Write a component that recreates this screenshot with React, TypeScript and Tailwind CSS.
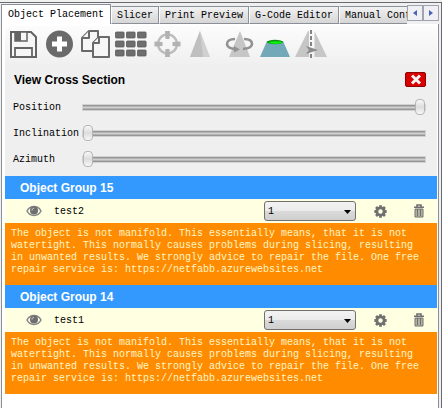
import { useState, type ReactNode } from "react";

const WARNING =
  "The object is not manifold. This essentially means, that it is not watertight. This normally causes problems during slicing, resulting in unwanted results. We strongly advice to repair the file. One free repair service is: https://netfabb.azurewebsites.net";

const TABS = ["Object Placement", "Slicer", "Print Preview", "G-Code Editor", "Manual Control"];

const GROUPS = [
  { title: "Object Group 15", name: "test2" },
  { title: "Object Group 14", name: "test1" },
];

const TOOLS: { label: string; icon: ReactNode }[] = [
  {
    label: "Save",
    icon: (
      <>
        <path d="M6 6H26L31 11V31H6Z" fill="#f6f6f6" stroke="#646464" strokeWidth="2" />
        <path d="M10 6H22V15H10Z" fill="#f6f6f6" stroke="#646464" strokeWidth="1.5" />
        <path d="M10 6H16V15H10Z" fill="#646464" />
        <path d="M10 31V22H27V31" fill="none" stroke="#646464" strokeWidth="1.8" />
      </>
    ),
  },
  {
    label: "Add object",
    icon: (
      <>
        <circle cx="18.5" cy="18" r="13.5" fill="#6a6a6a" />
        <path d="M18.5 10.5V25.5M11 18H26" stroke="#fff" strokeWidth="5" strokeLinejoin="round" />
      </>
    ),
  },
  {
    label: "Copy",
    icon: (
      <g fill="#f6f6f6" stroke="#6a6a6a" strokeWidth="2" strokeLinejoin="round">
        <path d="M12 5H21V25H5V12Z" />
        <path d="M12 5V12H5" />
        <path d="M22 11H32V31H16V17Z" />
        <path d="M22 11V17H16" />
      </g>
    ),
  },
  {
    label: "Autoposition",
    icon: (
      <g fill="#6e6e6e" stroke="#5c5c5c" strokeWidth="0.8">
        {[6, 15, 24].map((y) =>
          [2.5, 13.5, 24.5].map((x) => (
            <rect key={`${x}-${y}`} x={x} y={y} width="8.6" height="6" rx="0.8" />
          ))
        )}
      </g>
    ),
  },
  {
    label: "Center object",
    icon: (
      <>
        <circle cx="18.5" cy="18" r="9.5" fill="none" stroke="#bcbcbc" strokeWidth="2.4" />
        <path
          d="M16 5H21L20.5 13H16.5ZM16 31H21L20.5 23H16.5ZM5.5 15.5V20.5L13.5 20V16ZM31.5 15.5V20.5L23.5 20V16Z"
          fill="#b2b2b2"
        />
      </>
    ),
  },
  {
    label: "Scale",
    icon: (
      <>
        <path d="M15 5L25 31H5Z" fill="#d0d0d0" />
        <path d="M15 5L18 31H5Z" fill="#bfbfbf" />
      </>
    ),
  },
  {
    label: "Rotate",
    icon: (
      <>
        <path d="M19 5L29 31H8Z" fill="#c6c6c6" />
        <path
          d="M14 13C9 13 6 15 6 18C6 20.5 9.5 22.5 14 23M23 13C28 13 31 15 31 18C31 20.5 27.5 22.5 22 23"
          fill="none"
          stroke="#929292"
          strokeWidth="2.6"
        />
        <path d="M13 20L19 23.5L13 26.5Z" fill="#929292" />
      </>
    ),
  },
  {
    label: "Cross section",
    icon: (
      <>
        <path d="M10 15H26L33 31H3Z" fill="#72a8b8" />
        <ellipse cx="18" cy="16" rx="8" ry="2.2" fill="#0c8f12" />
        <ellipse cx="18.5" cy="16.6" rx="6.5" ry="1.4" fill="#0bf00b" />
      </>
    ),
  },
  {
    label: "Mirror",
    icon: (
      <>
        <path d="M15 5V31H2ZM21.5 5V31H34Z" fill="#c6c6c6" />
        <path d="M15 5H16V31H15Z" fill="#c6c6c6" />
        <path d="M18 4V32" stroke="#838383" strokeWidth="2" strokeDasharray="4 2" />
        <path d="M13 20L25 24L13 28L16 24Z" fill="#8a8a8a" />
      </>
    ),
  },
];

function EyeIcon() {
  return (
    <svg width="16" height="12" viewBox="0 0 16 12">
      <path d="M1 6C4 0 12 0 15 6C12 12 4 12 1 6Z" fill="#fbfbe9" stroke="#858585" strokeWidth="1.5" />
      <circle cx="8" cy="5.5" r="4" fill="#6e6e6e" />
      <path d="M6 5.5C6 4 7 3.3 8 3.3" fill="none" stroke="#ddd" />
    </svg>
  );
}

function GearIcon() {
  return (
    <svg width="13" height="13" viewBox="0 0 14 14">
      <circle cx="7" cy="7" r="3.9" fill="none" stroke="#707070" strokeWidth="3" />
      <g stroke="#707070" strokeWidth="3">
        <path d="M7 0.4V3M7 11V13.6M0.4 7H3M11 7H13.6" />
        <path d="M2.2 2.2L4 4M10 10L11.8 11.8M11.8 2.2L10 4M4 10L2.2 11.8" />
      </g>
    </svg>
  );
}

function TrashIcon() {
  return (
    <svg width="12" height="14" viewBox="0 0 12 14">
      <path d="M4 2.5V1H8V2.5M1 3.2H11" fill="none" stroke="#707070" strokeWidth="1.6" />
      <path d="M2 5H10V13H2Z" fill="#b9b9a8" stroke="#707070" />
      <path d="M4.5 5V12M7.5 5V12" stroke="#707070" strokeWidth="1.2" />
    </svg>
  );
}

function SliderRow({ label, initial }: { label: string; initial: number }) {
  const [value, setValue] = useState(initial);
  const id = label.toLowerCase();
  return (
    <div className="flex h-[26px] items-center">
      <label htmlFor={id} className="w-[69px] shrink-0">
        {label}
      </label>
      <input
        id={id}
        type="range"
        value={value}
        onChange={(e) => setValue(Number(e.target.value))}
        className="h-4 min-w-0 flex-1 appearance-none bg-transparent [&::-webkit-slider-runnable-track]:h-[7px] [&::-webkit-slider-runnable-track]:border [&::-webkit-slider-runnable-track]:border-[#d2d2d2] [&::-webkit-slider-runnable-track]:bg-[linear-gradient(#969696_0_1px,#b4b4b4_1px_2px,#cfcfcf_2px_3px,#b4b4b4_3px_4px,#969696_4px_5px)] [&::-webkit-slider-thumb]:-mt-[6px] [&::-webkit-slider-thumb]:h-4 [&::-webkit-slider-thumb]:w-[10px] [&::-webkit-slider-thumb]:appearance-none [&::-webkit-slider-thumb]:rounded-[4px] [&::-webkit-slider-thumb]:border [&::-webkit-slider-thumb]:border-[#b5b5b5] [&::-webkit-slider-thumb]:bg-[linear-gradient(#f8f8f8,#dcdcdc_50%,#f8f8f8)]"
      />
    </div>
  );
}

function ObjectGroup({ title, name }: { title: string; name: string }) {
  return (
    <section>
      <h2 className="h-[23px] bg-[#3399ff] pl-[15px] font-['Liberation_Sans',sans-serif] text-xs leading-6 font-bold text-white">
        {title}
      </h2>
      <div className="flex h-6 items-center bg-[#ffffe1] pr-3 pl-[21px]">
        <button aria-label="Toggle visibility">
          <EyeIcon />
        </button>
        <span className="ml-3 flex-1">{name}</span>
        <div className="relative">
          <select
            aria-label={`Extruder for ${name}`}
            className="block h-5 w-[92px] appearance-none rounded-[3px] border border-[#707070] bg-[linear-gradient(#f3f3f3,#ebebeb_50%,#dadada_50%,#cfcfcf)] pl-[3px]"
          >
            <option>1</option>
            <option>2</option>
          </select>
          <svg className="pointer-events-none absolute top-[9px] right-[5px]" width="7" height="4" viewBox="0 0 7 4">
            <path d="M0 0H7L3.5 4Z" fill="#000" />
          </svg>
        </div>
        <button aria-label="Settings" className="ml-[18px]">
          <GearIcon />
        </button>
        <button aria-label="Delete" className="ml-[26px]">
          <TrashIcon />
        </button>
      </div>
      <p className="bg-[#ff8c00] px-[6px] pt-[5px] pb-[9px] leading-3 text-[#fff5c8]">{WARNING}</p>
    </section>
  );
}

function ScrollButton({ label, points }: { label: string; points: string }) {
  return (
    <button
      aria-label={label}
      className="mt-[2px] flex h-4 w-4 items-center justify-center self-start border border-[#a0a4b0] bg-[#f0f0f4]"
    >
      <svg width="4" height="6" viewBox="0 0 4 6">
        <polygon points={points} fill="#4a62b5" />
      </svg>
    </button>
  );
}

export default function App() {
  const [active, setActive] = useState(TABS[0]);

  return (
    <div className="flex min-h-screen flex-col bg-[#f0f0f0] pt-[2px] font-['Liberation_Mono',monospace] text-[10px] text-black">
      <div className="flex flex-1 flex-col border-t border-r border-[#6a6a70] pr-[2px]">
        <div className="flex h-[21px] items-end pl-px">
          <div role="tablist" className="flex min-w-0 flex-1 items-end overflow-hidden">
            {TABS.map((tab) => (
              <button
                key={tab}
                role="tab"
                aria-selected={tab === active}
                onClick={() => setActive(tab)}
                className={
                  tab === active
                    ? "h-5 shrink-0 border-x border-t border-[#8b8f98] bg-white px-[6px] pb-px"
                    : "h-[18px] shrink-0 border border-t-[#8b8f98] border-r-[#8b8f98] border-b-[#8b8f98] border-l-white bg-linear-to-b from-[#f2f2f2] to-[#d6d6d6] px-[5px] pt-px"
                }
              >
                {tab}
              </button>
            ))}
          </div>
          <ScrollButton label="Scroll tabs left" points="4,0 4,6 0,3" />
          <ScrollButton label="Scroll tabs right" points="0,0 0,6 4,3" />
        </div>

        <main className="ml-px flex-1 border-x border-[#8b8f98] bg-white pt-[2px] pr-px pl-[3px]">
          <div className="flex h-[38px] items-start rounded-t bg-linear-to-b from-[#fcfcfc] to-[#f0f0f0]">
            {TOOLS.map((tool) => (
              <button key={tool.label} aria-label={tool.label} className="h-9 w-9 shrink-0">
                <svg width="36" height="36" viewBox="0 0 36 36">
                  {tool.icon}
                </svg>
              </button>
            ))}
          </div>

          <section className="bg-[#efefef] pr-[11px] pb-1 pl-2">
            <div className="flex h-[30px] items-center justify-between">
              <h1 className="pt-px pl-px font-['Liberation_Sans',sans-serif] text-xs font-bold">View Cross Section</h1>
              <button
                aria-label="Close"
                className="flex h-[15px] w-[21px] items-center justify-center rounded-[2px] border border-[#8f0000] bg-[#d80000]"
              >
                <svg width="12" height="11" viewBox="0 0 12 11">
                  <path d="M2 1.5L10 9.5M10 1.5L2 9.5" stroke="#f4f4f4" strokeWidth="3" />
                </svg>
              </button>
            </div>
            <SliderRow label="Position" initial={100} />
            <SliderRow label="Inclination" initial={0} />
            <SliderRow label="Azimuth" initial={0} />
          </section>

          {GROUPS.map((group) => (
            <ObjectGroup key={group.name} {...group} />
          ))}
        </main>
      </div>
    </div>
  );
}
